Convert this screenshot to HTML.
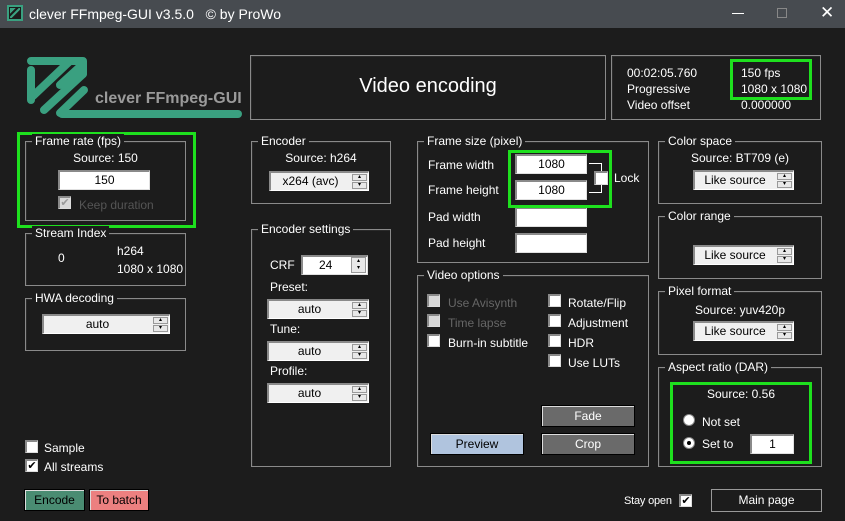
<!DOCTYPE html>
<html><head><meta charset="utf-8"><style>
*{box-sizing:border-box;margin:0;padding:0}
body{width:845px;height:521px;background:#1c1c1c;font-family:"Liberation Sans",sans-serif;font-size:12px;color:#fff;position:relative;overflow:hidden}
.a{position:absolute;white-space:nowrap}
.g{position:absolute;border:1px solid #8a8a8a;box-shadow:inset 1px 1px 0 #2a2a2a}
.gt{position:absolute;top:-8px;left:6px;background:#1c1c1c;padding:0 3px;font-size:12px;line-height:14px}
.grn{position:absolute;border:3px solid #1ee01e}
.in{position:absolute;background:#fff;color:#000;border-top:2px solid #8a8a8a;border-left:2px solid #8a8a8a;border-right:1px solid #e0e0e0;border-bottom:1px solid #e0e0e0;text-align:center;font-size:12px;line-height:16px}
.cb{position:absolute;background:#f0f0f0;color:#000;border-top:2px solid #8a8a8a;border-left:2px solid #8a8a8a;border-right:1px solid #fff;border-bottom:1px solid #fff;font-size:12px;line-height:16px}
.cb span{position:absolute;left:0;right:18px;text-align:center}
.cb i{position:absolute;right:1px;top:1px;width:15px;height:7px;background:#e8e8e8;border:1px solid #999;font-style:normal;font-size:6px;line-height:5px;text-align:center}
.cb i+i{top:9px}
.ck{position:absolute;width:13px;height:13px;background:#fff;border-top:2px solid #8a8a8a;border-left:2px solid #8a8a8a;border-right:1px solid #ddd;border-bottom:1px solid #ddd;color:#000;font-size:11px;line-height:10px;text-align:center}
.dis{background:#d8d8d8}
.btn{position:absolute;text-align:center;font-size:12px;border:1px solid #000;box-shadow:inset 1px 1px 0 #ddd}
.r{position:absolute;width:12px;height:12px;border-radius:50%;background:#fff;border:1px solid #888}
</style></head><body>
<div class="a" style="left:0;top:0;width:845px;height:28px;background:#474b50"></div>
<div class="a" style="left:7px;top:5px;width:16px;height:16px;background:#1c1c1c;border:2px solid #3aa080"></div>
<div class="a" style="left:10px;top:8px;width:10px;height:10px;background:linear-gradient(135deg,#3aa080 30%,#1c1c1c 30%,#1c1c1c 45%,#3aa080 45%,#3aa080 60%,#1c1c1c 60%)"></div>
<div class="a" style="left:29px;top:5px;font-size:14px;color:#fff;line-height:18px">clever FFmpeg-GUI v3.5.0&nbsp;&nbsp;&nbsp;© by ProWo</div>
<div class="a" style="left:732px;top:13px;width:12px;height:1px;background:#fff"></div>
<div class="a" style="left:777px;top:8px;width:10px;height:10px;border:1px solid #888"></div>
<div class="a" style="left:820px;top:3px;font-size:17px;color:#fff">✕</div>

<svg class="a" style="left:0;top:0" width="250" height="125" viewBox="0 0 250 125">
<g fill="none" stroke="#3aa080" stroke-width="8" stroke-linecap="round" stroke-linejoin="round">
<path d="M31 61 H83 V74"/>
<path d="M70 61 L33 96"/>
<path d="M31 70 V100"/>
<path d="M83 74 L44 110"/>
<path d="M60 85 L83 64"/>
<path d="M62 114 H238"/>
<path d="M84 90 L60 113"/>
</g>
</svg>
<div class="a" style="left:95px;top:90px;font-size:16px;font-weight:bold;color:#9a9a9a">clever FFmpeg-GUI</div>

<div class="g" style="left:250px;top:55px;width:356px;height:65px"></div>
<div class="a" style="left:250px;top:75px;width:356px;text-align:center;font-size:20px">Video encoding</div>
<div class="g" style="left:611px;top:55px;width:210px;height:65px"></div>
<div class="a" style="left:627px;top:65px;line-height:16px">00:02:05.760<br>Progressive<br>Video offset</div>
<div class="a" style="left:741px;top:65px;line-height:16px">150 fps<br>1080 x 1080<br>0.000000</div>
<div class="grn" style="left:730px;top:59px;width:82px;height:41px"></div>

<div class="grn" style="left:17px;top:132px;width:179px;height:96px"></div>
<div class="g" style="left:25px;top:141px;width:161px;height:80px"><div class="gt">Frame rate (fps)</div></div>
<div class="a" style="left:25px;top:151px;width:161px;text-align:center">Source: 150</div>
<div class="in" style="left:58px;top:170px;width:92px;height:20px">150</div>
<div class="ck dis" style="left:58px;top:196px;color:#999">✔</div>
<div class="a" style="left:79px;top:198px;color:#555">Keep duration</div>

<div class="g" style="left:25px;top:233px;width:161px;height:53px"><div class="gt">Stream Index</div></div>
<div class="a" style="left:58px;top:251px">0</div>
<div class="a" style="left:117px;top:242px;line-height:18px">h264<br>1080 x 1080</div>

<div class="g" style="left:25px;top:298px;width:161px;height:53px"><div class="gt">HWA decoding</div></div>
<div class="cb" style="left:42px;top:314px;width:128px;height:20px"><span>auto</span><i>▴</i><i>▾</i></div>

<div class="g" style="left:251px;top:141px;width:140px;height:63px"><div class="gt">Encoder</div></div>
<div class="a" style="left:251px;top:151px;width:140px;text-align:center">Source: h264</div>
<div class="cb" style="left:269px;top:171px;width:100px;height:20px"><span>x264 (avc)</span><i>▴</i><i>▾</i></div>

<div class="g" style="left:251px;top:229px;width:140px;height:238px"><div class="gt">Encoder settings</div></div>
<div class="a" style="left:270px;top:258px">CRF</div>
<div class="in" style="left:301px;top:255px;width:67px;height:20px;text-align:left;padding-left:16px">24</div>
<div class="a" style="left:351px;top:257px;width:15px;height:16px;background:#e8e8e8;border:1px solid #999;color:#000;font-size:6px;line-height:7px;text-align:center">▴<br>▾</div>
<div class="a" style="left:270px;top:280px">Preset:</div>
<div class="cb" style="left:267px;top:299px;width:102px;height:20px"><span>auto</span><i>▴</i><i>▾</i></div>
<div class="a" style="left:270px;top:322px">Tune:</div>
<div class="cb" style="left:267px;top:341px;width:102px;height:20px"><span>auto</span><i>▴</i><i>▾</i></div>
<div class="a" style="left:270px;top:364px">Profile:</div>
<div class="cb" style="left:267px;top:383px;width:102px;height:20px"><span>auto</span><i>▴</i><i>▾</i></div>

<div class="g" style="left:417px;top:141px;width:232px;height:122px"><div class="gt">Frame size (pixel)</div></div>
<div class="a" style="left:428px;top:158px">Frame width</div>
<div class="a" style="left:428px;top:183px">Frame height</div>
<div class="a" style="left:428px;top:210px">Pad width</div>
<div class="a" style="left:428px;top:236px">Pad height</div>
<div class="in" style="left:515px;top:154px;width:72px;height:20px">1080</div>
<div class="in" style="left:515px;top:180px;width:72px;height:20px">1080</div>
<div class="in" style="left:515px;top:207px;width:72px;height:20px"></div>
<div class="in" style="left:515px;top:233px;width:72px;height:20px"></div>
<div class="a" style="left:589px;top:163px;width:13px;height:30px;border:1px solid #fff;border-left:none"></div>
<div class="ck" style="left:594px;top:171px;width:14px;height:14px"></div>
<div class="grn" style="left:508px;top:150px;width:104px;height:58px"></div>
<div class="a" style="left:614px;top:171px">Lock</div>

<div class="g" style="left:417px;top:275px;width:232px;height:192px"><div class="gt">Video options</div></div>
<div class="ck dis" style="left:427px;top:294px"></div><div class="a" style="left:448px;top:296px;color:#666">Use Avisynth</div>
<div class="ck dis" style="left:427px;top:314px"></div><div class="a" style="left:448px;top:316px;color:#666">Time lapse</div>
<div class="ck" style="left:427px;top:334px"></div><div class="a" style="left:448px;top:336px">Burn-in subtitle</div>
<div class="ck" style="left:548px;top:294px"></div><div class="a" style="left:568px;top:296px">Rotate/Flip</div>
<div class="ck" style="left:548px;top:314px"></div><div class="a" style="left:568px;top:316px">Adjustment</div>
<div class="ck" style="left:548px;top:334px"></div><div class="a" style="left:568px;top:336px">HDR</div>
<div class="ck" style="left:548px;top:354px"></div><div class="a" style="left:568px;top:356px">Use LUTs</div>
<div class="btn" style="left:541px;top:405px;width:94px;height:22px;line-height:20px;background:#6a6a6a">Fade</div>
<div class="btn" style="left:541px;top:433px;width:94px;height:22px;line-height:20px;background:#6a6a6a">Crop</div>
<div class="btn" style="left:430px;top:433px;width:94px;height:22px;line-height:20px;background:#b0c4de;color:#000">Preview</div>

<div class="g" style="left:658px;top:141px;width:164px;height:63px"><div class="gt">Color space</div></div>
<div class="a" style="left:658px;top:151px;width:164px;text-align:center">Source: BT709 (e)</div>
<div class="cb" style="left:693px;top:170px;width:101px;height:20px"><span>Like source</span><i>▴</i><i>▾</i></div>
<div class="g" style="left:658px;top:216px;width:164px;height:63px"><div class="gt">Color range</div></div>
<div class="cb" style="left:693px;top:245px;width:101px;height:20px"><span>Like source</span><i>▴</i><i>▾</i></div>
<div class="g" style="left:658px;top:291px;width:164px;height:64px"><div class="gt">Pixel format</div></div>
<div class="a" style="left:658px;top:303px;width:164px;text-align:center">Source: yuv420p</div>
<div class="cb" style="left:693px;top:321px;width:101px;height:20px"><span>Like source</span><i>▴</i><i>▾</i></div>
<div class="g" style="left:658px;top:367px;width:164px;height:100px"><div class="gt">Aspect ratio (DAR)</div></div>
<div class="grn" style="left:670px;top:382px;width:142px;height:82px"></div>
<div class="a" style="left:670px;top:387px;width:142px;text-align:center">Source: 0.56</div>
<div class="r" style="left:683px;top:414px"></div><div class="a" style="left:702px;top:415px">Not set</div>
<div class="r" style="left:683px;top:437px"><div style="position:absolute;left:3px;top:3px;width:4px;height:4px;border-radius:50%;background:#000"></div></div><div class="a" style="left:702px;top:437px">Set to</div>
<div class="in" style="left:750px;top:434px;width:44px;height:20px">1</div>

<div class="ck" style="left:25px;top:440px"></div><div class="a" style="left:44px;top:441px">Sample</div>
<div class="ck" style="left:25px;top:459px">✔</div><div class="a" style="left:44px;top:460px">All streams</div>
<div class="btn" style="left:24px;top:489px;width:61px;height:22px;line-height:20px;background:#4a8c72;color:#000">Encode</div>
<div class="btn" style="left:89px;top:489px;width:60px;height:22px;line-height:20px;background:#ec8080;color:#000">To batch</div>
<div class="a" style="left:624px;top:495px;font-size:11px;letter-spacing:-0.2px">Stay open</div>
<div class="ck" style="left:679px;top:494px">✔</div>
<div class="btn" style="left:711px;top:489px;width:111px;height:23px;line-height:21px;background:#1c1c1c;border:1px solid #999;box-shadow:none">Main page</div>
</body></html>
